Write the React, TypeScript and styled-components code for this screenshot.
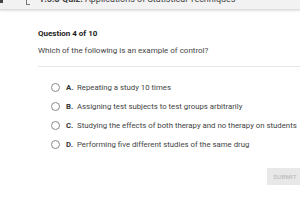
import React from "react";
import styled, { createGlobalStyle } from "styled-components";

const Global = createGlobalStyle`
  html, body { margin: 0; padding: 0; background: #fff; }
  body { font-family: Roboto, "Liberation Sans", sans-serif; color: #333; overflow: hidden; }
`;

const Page = styled.div`
  width: 300px;
  height: 221px;
  display: flex;
  flex-direction: column;
  background: #fff;
`;

const TopBar = styled.div`
  height: 9px;
  background: #f2f2f2;
  border-bottom: 1px solid #dcdcdc;
  box-shadow: 0 1px 2px rgba(0,0,0,0.12);
  position: relative;
  overflow: hidden;
`;

const MenuBlock = styled.div`
  position: absolute;
  left: 0;
  top: 0;
  width: 3px;
  height: 3px;
  background: #444;
`;

const BarIcon = styled.div`
  position: absolute;
  left: 26px;
  top: -2px;
  width: 3px;
  height: 6px;
  border-left: 1px solid #777;
  border-bottom: 1px solid #777;
`;

const BarTitle = styled.div`
  position: absolute;
  left: 39px;
  top: -6px;
  font-size: 9px;
  color: #444;
  white-space: nowrap;
  b { font-weight: 700; }
`;

const Content = styled.div`
  padding: 19px 0 0 38px;
  display: flex;
  flex-direction: column;
`;

const QTitle = styled.div`
  font-size: 8px;
  font-weight: 700;
  color: #222;
  line-height: 10px;
`;

const QText = styled.div`
  margin-top: 7px;
  font-size: 8px;
  color: #444;
  line-height: 10px;
`;

const Divider = styled.div`
  margin-top: 10px;
  height: 1px;
  background: #e6e6e6;
  width: 262px;
`;

const Options = styled.div`
  display: flex;
  flex-direction: column;
  gap: 9px;
  padding: 15px 0 0 13px;
`;

const Option = styled.div`
  display: flex;
  align-items: center;
  height: 10px;
  font-size: 7.8px;
  color: #444;
  white-space: nowrap;
`;

const Radio = styled.span`
  width: 9px;
  height: 9px;
  border: 1px solid #8a8a8a;
  border-radius: 50%;
  box-sizing: border-box;
  margin-right: 6px;
  flex-shrink: 0;
`;

const Letter = styled.span`
  font-weight: 700;
  color: #333;
  width: 11px;
`;

const Footer = styled.div`
  display: flex;
  justify-content: flex-end;
  padding-top: 19px;
`;

const Submit = styled.div`
  width: 36px;
  height: 17px;
  margin-right: -3px;
  background: #e8e8e8;
  color: #c3c3c3;
  font-size: 6px;
  font-weight: 700;
  display: flex;
  align-items: center;
  justify-content: center;
  letter-spacing: 0.2px;
`;

const options = [
  ["A.", "Repeating a study 10 times"],
  ["B.", "Assigning test subjects to test groups arbitrarily"],
  ["C.", "Studying the effects of both therapy and no therapy on students"],
  ["D.", "Performing five different studies of the same drug"],
];

export default function App() {
  return (
    <Page>
      <Global />
      <TopBar>
        <MenuBlock />
        <BarIcon />
        <BarTitle>
          <b>1.5.3 Quiz:</b> Applications of Statistical Techniques
        </BarTitle>
      </TopBar>
      <Content>
        <QTitle>Question 4 of 10</QTitle>
        <QText>Which of the following is an example of control?</QText>
        <Divider />
        <Options>
          {options.map(([l, t]) => (
            <Option key={l}>
              <Radio />
              <Letter>{l}</Letter>
              {t}
            </Option>
          ))}
        </Options>
      </Content>
      <Footer>
        <Submit>SUBMIT</Submit>
      </Footer>
    </Page>
  );
}
